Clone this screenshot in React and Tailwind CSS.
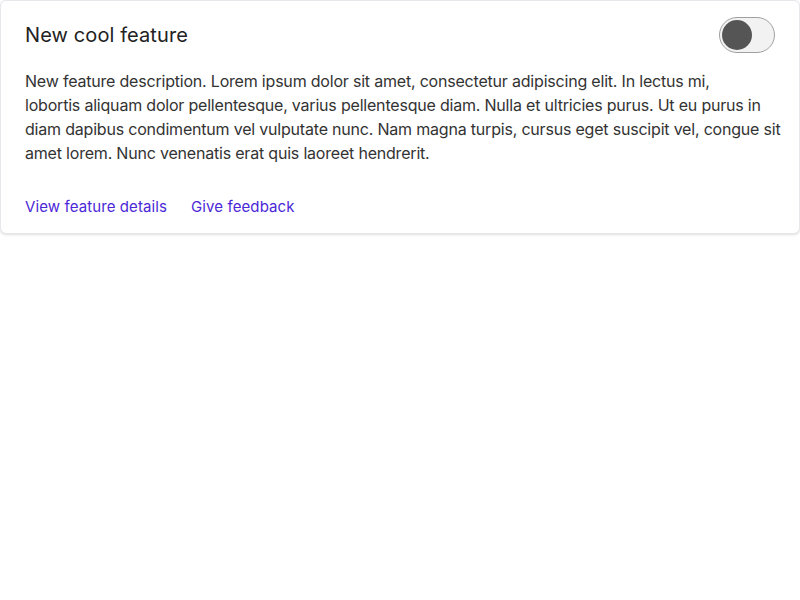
import React, { useState } from "react";

const App = () => {
  const [enabled, setEnabled] = useState(false);

  return (
    <div className="min-h-screen bg-white font-['Inter','Noto_Sans',sans-serif]">
      <div className="bg-white border border-gray-200 rounded-md shadow-sm px-6 pt-4 pb-4">
        <div className="flex items-center justify-between h-9">
          <h2 className="text-xl text-[#222] tracking-[0.1px]">New cool feature</h2>
          <button
            onClick={() => setEnabled(!enabled)}
            className="w-14 h-9 rounded-full border border-[#a0a0a0] bg-[#f2f2f2] flex items-center px-[2px]"
          >
            <span className="block w-[30px] h-[30px] rounded-full bg-[#555]" />
          </button>
        </div>

        {/* line breaks kept as in the design */}
        <p className="mt-4 text-base leading-6 text-[#333] tracking-[-0.2px] whitespace-nowrap">
          New feature description. Lorem ipsum dolor sit amet, consectetur adipiscing elit. In lectus mi,
          <br />
          lobortis aliquam dolor pellentesque, varius pellentesque diam. Nulla et ultricies purus. Ut eu purus in
          <br />
          diam dapibus condimentum vel vulputate nunc. Nam magna turpis, cursus eget suscipit vel, congue sit
          <br />
          amet lorem. Nunc venenatis erat quis laoreet hendrerit.
        </p>

        <div className="mt-8 flex gap-6 text-[15px] leading-5 text-[#4b27d8] tracking-[0.1px]">
          <a href="#">View feature details</a>
          <a href="#">Give feedback</a>
        </div>
      </div>
    </div>
  );
};

export default App;
